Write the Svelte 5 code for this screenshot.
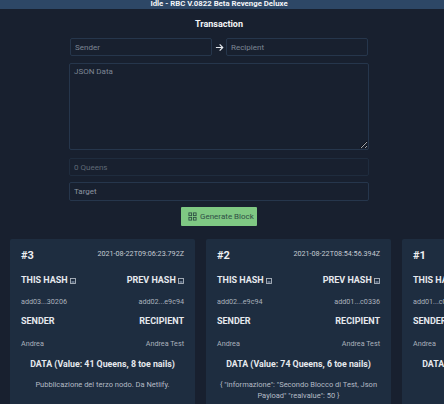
<script lang="ts">
  const blocks = [
    {
      n: 3, time: '2021-08-22T09:06:23.792Z', hash: 'add03...30206', prev: 'add02...e9c94',
      value: 41, nails: 8, data: 'Pubblicazione del terzo nodo. Da Netlify.',
    },
    {
      n: 2, time: '2021-08-22T08:54:56.394Z', hash: 'add02...e9c94', prev: 'add01...c0336',
      value: 74, nails: 6, data: '{ "informazione": "Secondo Blocco di Test, Json Payload" "realvalue": 50 }',
    },
    {
      n: 1, time: '2021-08-22T08:40:12.105Z', hash: 'add01...c0336', prev: 'add00...00000',
      value: 50, nails: 3, data: 'Primo blocco.',
    },
  ]
</script>

{#snippet copyIcon()}
  <svg class="copy" viewBox="0 0 6 6" width="6" height="6" aria-hidden="true">
    <rect x="0.5" y="0.5" width="5" height="5" fill="none" stroke="#aeb5bf" stroke-width="0.9" />
    <rect x="1.5" y="3" width="3" height="2" fill="#5f6f86" />
  </svg>
{/snippet}

<div class="page">
  <header class="status">Idle - RBC V.0822 Beta Revenge Deluxe</header>

  <section class="form">
    <h2>Transaction</h2>
    <div class="pair">
      <input placeholder="Sender" />
      <svg class="arrow" viewBox="0 0 10 10" width="9" height="9" aria-hidden="true">
        <path d="M1 5h7.5M5.2 1.6 8.6 5 5.2 8.4" fill="none" stroke="currentColor" stroke-width="1.3" />
      </svg>
      <input placeholder="Recipient" />
    </div>
    <textarea placeholder="JSON Data"></textarea>
    <input class="wide dim" placeholder="0 Queens" disabled />
    <input class="wide target" placeholder="Target" />
    <button class="generate">
      <svg viewBox="0 0 10 10" width="9" height="9" aria-hidden="true">
        <g fill="none" stroke="currentColor" stroke-width="1">
          <rect x="1" y="1" width="3" height="3" />
          <rect x="6" y="1" width="3" height="3" />
          <rect x="1" y="6" width="3" height="3" />
          <rect x="6" y="6" width="3" height="3" />
        </g>
      </svg>
      Generate Block
    </button>
  </section>

  <section class="chain">
    {#each blocks as b (b.n)}
      <article class="card">
        <div class="row top">
          <h3>#{b.n}</h3>
          <span class="time">{b.time}</span>
        </div>
        <div class="row heads">
          <b>THIS HASH {@render copyIcon()}</b>
          <b>PREV HASH {@render copyIcon()}</b>
        </div>
        <div class="row vals">
          <span>{b.hash}</span>
          <span>{b.prev}</span>
        </div>
        <div class="row heads second">
          <b>SENDER</b>
          <b>RECIPIENT</b>
        </div>
        <div class="row vals last">
          <span>Andrea</span>
          <span>Andrea Test</span>
        </div>
        <h4>DATA (Value: {b.value} Queens, {b.nails} toe nails)</h4>
        <p>{b.data}</p>
      </article>
    {/each}
  </section>
</div>

<style>
  :global(body) {
    margin: 0;
    background: #18202f;
    overflow: hidden;
  }

  .page {
    width: 444px;
    height: 404px;
    overflow: hidden;
    font-family: Roboto, "Noto Sans", sans-serif;
    color: #e6e9ee;
  }

  .status {
    height: 9px;
    line-height: 8px;
    padding-right: 6px;
    background: #2d4766;
    color: #f2f4f7;
    font-size: 7.8px;
    font-weight: 700;
    text-align: center;
  }

  .form {
    width: 300px;
    margin-left: 69px;
    display: flex;
    flex-direction: column;
    align-items: center;
  }

  h2 {
    margin: 9px 0 8px;
    font-size: 9px;
    line-height: 12px;
    font-weight: 700;
    color: #f5f6f8;
  }

  input, textarea {
    box-sizing: border-box;
    background: transparent;
    border: 1px solid #26364c;
    border-radius: 2px;
    color: #e6e9ee;
    font: inherit;
    font-size: 8px;
    outline: none;
    padding: 0 4px;
  }

  input::placeholder, textarea::placeholder {
    color: #7d8694;
    opacity: 1;
  }

  .pair {
    width: 298px;
    display: flex;
    align-items: center;
    justify-content: space-between;
  }

  .pair input {
    width: 142px;
    height: 18px;
  }

  .arrow {
    color: #e6e9ee;
  }

  textarea {
    display: block;
    width: 300px;
    height: 87px;
    margin-top: 7px;
    padding: 3px 4px;
  }

  .wide {
    width: 300px;
    height: 19px;
    margin-top: 6px;
  }

  .dim {
    height: 18px;
    margin-top: 8px;
    border-color: #1f2c3e;
  }

  .dim::placeholder {
    color: #5f6876;
  }

  .target::placeholder {
    color: #8d95a1;
  }

  .generate {
    display: flex;
    align-items: center;
    gap: 3px;
    height: 19px;
    width: 76px;
    margin-top: 6px;
    padding: 0 0 0 7px;
    box-sizing: border-box;
    background: #7fc883;
    border: none;
    border-radius: 1px;
    color: #2f4f45;
    font: inherit;
    font-size: 8px;
    white-space: nowrap;
  }

  .chain {
    display: flex;
    gap: 11px;
    margin: 13px 0 0 10px;
  }

  .card {
    flex: 0 0 185px;
    box-sizing: border-box;
    height: 170px;
    padding: 9px 11px;
    background: #1e2d40;
    border-radius: 2px;
  }

  .row {
    display: flex;
    justify-content: space-between;
    align-items: flex-start;
  }

  h3 {
    margin: 0;
    font-size: 11px;
    line-height: 16px;
    font-weight: 700;
    color: #eef0f3;
  }

  .time {
    margin-top: 1px;
    font-size: 7.2px;
    line-height: 10px;
    color: #c5cad2;
  }

  .heads {
    margin-top: 10px;
    font-size: 9px;
    line-height: 12px;
    color: #e6e9ee;
  }

  .heads.second {
    margin-top: 8px;
  }

  .copy {
    vertical-align: -1px;
  }

  .vals {
    margin-top: 11px;
    font-size: 7.2px;
    line-height: 10px;
    color: #aab1bc;
  }

  .vals.last {
    margin-top: 12px;
  }

  h4 {
    margin: 9px 0 0;
    font-size: 8.8px;
    line-height: 12px;
    font-weight: 700;
    text-align: center;
    color: #e6e9ee;
    white-space: nowrap;
  }

  p {
    margin: 9px 0 0;
    font-size: 7.5px;
    line-height: 11px;
    text-align: center;
    color: #b4bbc5;
  }
</style>
